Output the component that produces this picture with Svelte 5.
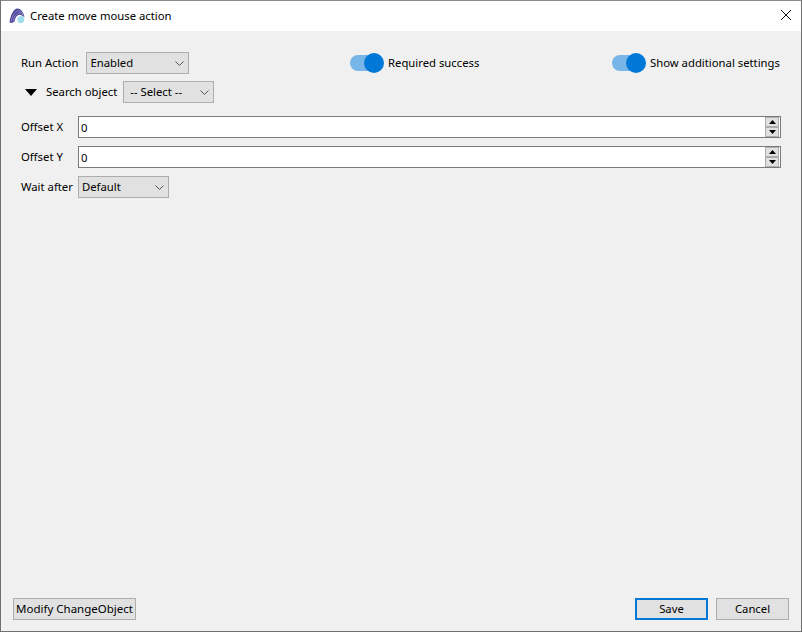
<script lang="ts">
  let runAction = $state('Enabled');
  let required = $state(true);
  let additional = $state(true);
  let expanded = $state(true);

  const offsets = ['Offset X', 'Offset Y'];
</script>

<div class="window">
  <header class="titlebar">
    <svg class="logo" width="16" height="16" viewBox="0 0 16 16">
      <ellipse cx="11.8" cy="11.6" rx="3.4" ry="3.6" fill="#9fdcec" />
      <path d="M0.5 14.5 C1.5 7 4.5 0.5 8.5 0.5 C12 0.5 14.8 4.5 15.5 9.5 C13.5 7.5 11.5 6.5 9.5 7 C7.5 7.5 6 10.5 5.5 13.5 L3 15 Z" fill="#4b4598" />
      <path d="M2.3 13.5 C3.3 8 5.5 3.2 9 2.8 C11 2.6 13 4.5 14 6.5 M4.2 13 C5.2 8.5 7.5 4.8 10.5 5 C11.8 5.1 13 5.8 14.3 7.5" fill="none" stroke="#a5a2d4" stroke-width="0.7" />
    </svg>
    <span class="title">Create move mouse action</span>
    <svg class="close" width="12" height="12" viewBox="0 0 12 12">
      <path d="M1 1 L11 11 M11 1 L1 11" stroke="#111" stroke-width="1" fill="none" />
    </svg>
  </header>

  <main class="content">
    <div class="top-row">
      <div class="group">
        <span class="label">Run Action</span>
        <div class="select run">
          <span>{runAction}</span>
          <svg width="9" height="5" viewBox="0 0 9 5"><path d="M0.5 0.5 L4.5 4.5 L8.5 0.5" fill="none" stroke="#555" /></svg>
        </div>
      </div>
      <div class="group toggle-group">
        <button class="toggle" class:on={required} onclick={() => (required = !required)} aria-label="Required success">
          <span class="track"></span><span class="thumb"></span>
        </button>
        <span class="label">Required success</span>
      </div>
      <div class="group toggle-group">
        <button class="toggle" class:on={additional} onclick={() => (additional = !additional)} aria-label="Show additional settings">
          <span class="track"></span><span class="thumb"></span>
        </button>
        <span class="label">Show additional settings</span>
      </div>
    </div>

    <div class="search-row">
      <button class="arrow" onclick={() => (expanded = !expanded)} aria-label="Toggle search object">
        <svg width="12" height="7" viewBox="0 0 12 7"><path d="M0 0 H12 L6 7 Z" fill="#000" /></svg>
      </button>
      <span class="label">Search object</span>
      <div class="select search">
        <span>-- Select --</span>
        <svg width="9" height="5" viewBox="0 0 9 5"><path d="M0.5 0.5 L4.5 4.5 L8.5 0.5" fill="none" stroke="#555" /></svg>
      </div>
    </div>

    {#each offsets as name}
      <div class="offset-row">
        <span class="label offset-label">{name}</span>
        <div class="spin">
          <span class="value">0</span>
          <div class="spin-buttons">
            <div class="spin-btn"><svg width="7" height="4" viewBox="0 0 7 4"><path d="M3.5 0 L7 4 H0 Z" fill="#000" /></svg></div>
            <div class="spin-btn"><svg width="7" height="4" viewBox="0 0 7 4"><path d="M0 0 H7 L3.5 4 Z" fill="#000" /></svg></div>
          </div>
        </div>
      </div>
    {/each}

    <div class="wait-row">
      <span class="label">Wait after</span>
      <div class="select wait">
        <span>Default</span>
        <svg width="9" height="5" viewBox="0 0 9 5"><path d="M0.5 0.5 L4.5 4.5 L8.5 0.5" fill="none" stroke="#555" /></svg>
      </div>
    </div>
  </main>

  <footer class="footer">
    <button class="btn modify">Modify ChangeObject</button>
    <div class="actions">
      <button class="btn save">Save</button>
      <button class="btn cancel">Cancel</button>
    </div>
  </footer>
</div>

<style>
  :global(body) {
    margin: 0;
    background: #f0f0f0;
  }

  .window {
    width: 802px;
    height: 632px;
    box-sizing: border-box;
    display: flex;
    flex-direction: column;
    background: #f0f0f0;
    border: 1px solid #707070;
    border-top-color: #8a8a8a;
    font-family: "Noto Sans", sans-serif;
    font-size: 11.3px;
    color: #000;
  }

  .titlebar {
    height: 30px;
    flex: none;
    background: #fff;
    display: flex;
    align-items: center;
    padding-left: 8px;
    padding-right: 9px;
  }

  .logo {
    margin-right: 5px;
    margin-bottom: 1px;
  }

  .title {
    flex: 1;
    padding-bottom: 2px;
  }

  .close {
    margin-bottom: 2px;
  }

  .content {
    flex: 1;
    padding: 21px 20px 0 20px;
  }

  .label {
    white-space: nowrap;
    line-height: 16px;
  }

  .top-row {
    display: flex;
    align-items: center;
    height: 22px;
  }

  .group {
    display: flex;
    align-items: center;
    flex: none;
  }

  .top-row .group:first-child {
    width: 329px;
    justify-content: flex-start;
    gap: 8px;
  }

  .toggle-group {
    gap: 4px;
  }

  .toggle-group:nth-child(2) {
    width: 262px;
  }

  .select {
    height: 22px;
    box-sizing: border-box;
    background: #e1e1e1;
    border: 1px solid #adadad;
    display: flex;
    align-items: center;
    justify-content: space-between;
    padding: 0 3px;
  }

  .select span {
    margin-bottom: 1px;
  }

  .select svg {
    margin-right: 1px;
  }

  .run {
    width: 103px;
  }

  .search {
    width: 91px;
    padding-left: 6px;
  }

  .wait {
    width: 91px;
  }

  .toggle {
    position: relative;
    width: 34px;
    height: 20px;
    padding: 0;
    border: 0;
    background: none;
    display: block;
  }

  .track {
    position: absolute;
    left: 0;
    top: 2px;
    width: 30px;
    height: 16px;
    border-radius: 8px;
    background: #78b5e9;
  }

  .thumb {
    position: absolute;
    right: 0;
    top: 0;
    width: 20px;
    height: 20px;
    border-radius: 50%;
    background: #0078d7;
  }

  .search-row {
    display: flex;
    align-items: center;
    height: 22px;
    margin-top: 7px;
    padding-left: 4px;
  }

  .arrow {
    width: 12px;
    height: 22px;
    padding: 0;
    border: 0;
    background: none;
    display: flex;
    align-items: center;
    margin-right: 9px;
  }

  .search-row .label {
    margin-right: 6px;
  }

  .offset-row {
    display: flex;
    align-items: center;
    height: 22px;
    margin-top: 8px;
  }

  .search-row + .offset-row {
    margin-top: 13px;
  }

  .offset-label {
    width: 57px;
    flex: none;
  }

  .spin {
    flex: 1;
    height: 22px;
    box-sizing: border-box;
    background: #fff;
    border: 1px solid #7a7a7a;
    display: flex;
    align-items: center;
    justify-content: space-between;
    padding-left: 2px;
  }

  .spin-buttons {
    display: flex;
    flex-direction: column;
    margin-right: 1px;
  }

  .spin-btn {
    width: 12px;
    height: 8px;
    background: #e1e1e1;
    border: 1px solid #adadad;
    box-sizing: content-box;
    display: flex;
    align-items: center;
    justify-content: center;
  }

  .wait-row {
    display: flex;
    align-items: center;
    gap: 5px;
    margin-top: 8px;
    height: 22px;
  }

  .footer {
    height: 22px;
    flex: none;
    display: flex;
    justify-content: space-between;
    padding: 0 12px 11px 12px;
  }

  .btn {
    height: 22px;
    box-sizing: border-box;
    background: #e1e1e1;
    border: 1px solid #adadad;
    font: inherit;
    padding: 0 0 2px;
    color: #000;
    white-space: nowrap;
  }

  .modify {
    width: 123px;
    font-size: 11.5px;
  }

  .actions {
    display: flex;
    gap: 8px;
  }

  .save {
    width: 73px;
    border: 2px solid #0078d7;
  }

  .cancel {
    width: 73px;
  }
</style>
